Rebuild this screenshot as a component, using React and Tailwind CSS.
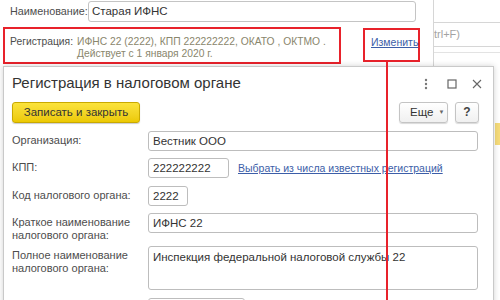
import React from 'react';

const font = { fontFamily: '"Liberation Sans", Arial, sans-serif' };

function Field({ label, children, className = '' }) {
  return (
    <div className={`flex items-start ${className}`}>
      <div className="w-[136px] shrink-0 text-[11px] leading-[13px] text-[#4d4d4d] pt-[3px]">{label}</div>
      {children}
    </div>
  );
}

function Input({ value, className = '' }) {
  return (
    <div className={`h-[20px] border border-[#bdbdbd] rounded-[3px] bg-white px-[4px] text-[11.5px] leading-[18px] text-[#333] ${className}`}>{value}</div>
  );
}

export default function App() {
  return (
    <div className="relative w-[500px] h-[300px] overflow-hidden bg-white" style={font}>
      {/* background window */}
      <div className="flex h-full">
        <div className="w-[434px] shrink-0 border-r border-[#d6d6d6] h-full">
          <div className="flex items-center pl-[10px] pt-[1px] h-[22px]">
            <span className="text-[10.8px] text-[#4d4d4d] w-[78px]">Наименование:</span>
            <div className="w-[328px] h-[21px] border border-[#c4c4c4] rounded-[3px] px-[3px] text-[11.5px] leading-[19px] text-[#333]">Старая ИФНС</div>
          </div>
          <div className="flex items-start mt-[5px]">
            <div className="ml-[3px] w-[338px] h-[37px] border-2 border-[#e8222b] flex pt-[7px] pl-[5px] text-[10.3px] leading-[12px]">
              <span className="text-[#4d4d4d] w-[67px] shrink-0">Регистрация:</span>
              <div className="text-[#8a866c] whitespace-nowrap">
                <div>ИФНС 22 (2222), КПП 222222222, ОКАТО , ОКТМО .</div>
                <div>Действует с 1 января 2020 г.</div>
              </div>
            </div>
            <div className="ml-[22px] mt-[1px] w-[57px] h-[34px] border-2 border-[#e8222b] pt-[6px] pl-[6px] text-[10.5px] leading-[12px]">
              <span className="text-[#3c5ea8] underline">Изменить</span>
            </div>
          </div>
        </div>
        <div className="flex-1 overflow-hidden">
          <div className="mt-[22px] h-[25px] border-y border-[#d6d6d6] text-[11px] leading-[23px] text-[#a3a3a3] whitespace-nowrap">trl+F)</div>
          <div className="mt-[5px] border-t border-[#e3e3e3]"></div>
          <div className="mt-[70px] ml-[61px] h-[22px] bg-[#f6dc7a]"></div>
        </div>
      </div>

      {/* annotation line */}
      <div className="absolute left-[386px] top-[62px] w-[2px] h-[240px] bg-[#e8222b] z-20"></div>

      {/* dialog */}
      <div className="absolute left-[3px] top-[66px] w-[491px] h-[260px] bg-white border border-[#c9c9c9] shadow-[0_0_6px_rgba(0,0,0,0.18)] z-10">
        <div className="flex items-center h-[33px] pl-[8px] pr-[8px]">
          <span className="text-[15px] text-[#333] flex-1">Регистрация в налоговом органе</span>
          <svg width="4" height="12" viewBox="0 0 4 12" className="mr-[19px]">
            <circle cx="2" cy="2" r="1.2" fill="#777" />
            <circle cx="2" cy="6" r="1.2" fill="#777" />
            <circle cx="2" cy="10" r="1.2" fill="#777" />
          </svg>
          <svg width="10" height="10" viewBox="0 0 10 10" className="mr-[15px]">
            <rect x="1" y="1" width="8" height="8" fill="none" stroke="#666" strokeWidth="1.2" />
          </svg>
          <svg width="10" height="10" viewBox="0 0 10 10" className="mr-[3px]">
            <path d="M1 1L9 9M9 1L1 9" stroke="#666" strokeWidth="1.1" />
          </svg>
        </div>
        <div className="flex items-center pl-[8px] pr-[14px] mt-[2px]">
          <div className="h-[21px] w-[128px] text-center rounded-[3px] border border-[#c9a900] bg-gradient-to-b from-[#fbe33a] to-[#ecc900] shadow-[0_1px_1px_rgba(0,0,0,0.2)] text-[11.5px] leading-[19px] text-[#333]">Записать и закрыть</div>
          <div className="flex-1"></div>
          <div className="h-[21px] w-[49px] rounded-[3px] border border-[#c4c4c4] bg-gradient-to-b from-white to-[#f0f0f0] shadow-[0_1px_1px_rgba(0,0,0,0.15)] flex items-center pl-[10px] text-[11.5px] text-[#333]">
            Еще<span className="ml-[5px] text-[6px] text-[#666]">▼</span>
          </div>
          <div className="ml-[7px] h-[21px] w-[24px] rounded-[3px] border border-[#c4c4c4] bg-gradient-to-b from-white to-[#f0f0f0] shadow-[0_1px_1px_rgba(0,0,0,0.15)] text-center text-[12px] font-bold leading-[19px] text-[#444]">?</div>
        </div>
        <div className="pl-[8px] mt-[8px] flex flex-col">
          <Field label="Организация:">
            <Input value="Вестник ООО" className="w-[330px]" />
          </Field>
          <Field label="КПП:" className="mt-[7px]">
            <Input value="222222222" className="w-[81px]" />
            <span className="ml-[9px] pt-[3px] text-[10.5px] text-[#3c5ea8] underline">Выбрать из числа известных регистраций</span>
          </Field>
          <Field label="Код налогового органа:" className="mt-[8px]">
            <Input value="2222" className="w-[40px]" />
          </Field>
          <Field label={<>Краткое наименование<br />налогового органа:</>} className="mt-[7px]">
            <Input value="ИФНС 22" className="w-[330px]" />
          </Field>
          <Field label={<>Полное наименование<br />налогового органа:</>} className="mt-[4px]">
            <div className="w-[330px] h-[44px] border border-[#bdbdbd] rounded-[3px] px-[4px] pt-[2px] text-[11.5px] text-[#333]">Инспекция федеральной налоговой службы 22</div>
          </Field>
          <Field label="" className="mt-[8px]">
            <Input value="" className="w-[97px]" />
          </Field>
        </div>
      </div>
    </div>
  );
}
